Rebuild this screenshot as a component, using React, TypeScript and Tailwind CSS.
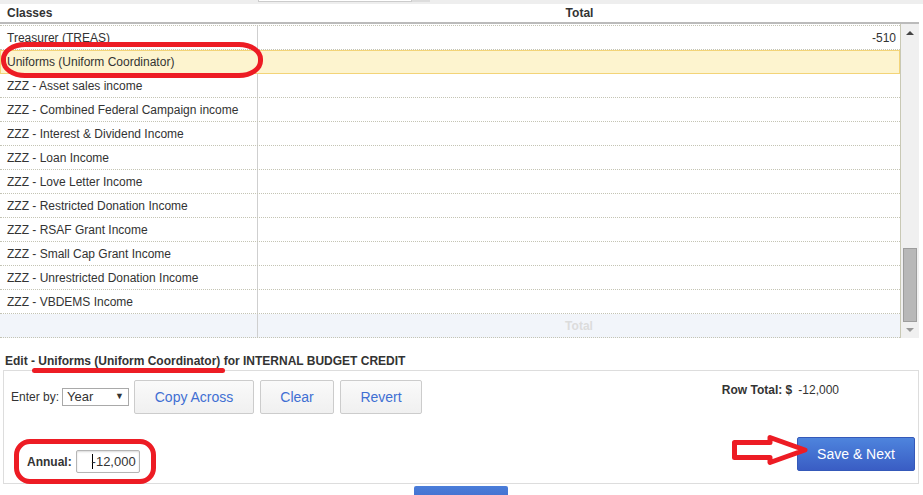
import React from "react";

const rows = [
  { name: "Treasurer (TREAS)", total: "-510" },
  { name: "Uniforms (Uniform Coordinator)", total: "", selected: true },
  { name: "ZZZ - Asset sales income", total: "" },
  { name: "ZZZ - Combined Federal Campaign income", total: "" },
  { name: "ZZZ - Interest & Dividend Income", total: "" },
  { name: "ZZZ - Loan Income", total: "" },
  { name: "ZZZ - Love Letter Income", total: "" },
  { name: "ZZZ - Restricted Donation Income", total: "" },
  { name: "ZZZ - RSAF Grant Income", total: "" },
  { name: "ZZZ - Small Cap Grant Income", total: "" },
  { name: "ZZZ - Unrestricted Donation Income", total: "" },
  { name: "ZZZ - VBDEMS Income", total: "" },
];

function GridRow({ name, total, selected }: { name: string; total: string; selected?: boolean }) {
  if (selected) {
    return (
      <div className="flex h-[24px] bg-[#fdf4cf] border border-[#f3d478] items-center">
        <div className="w-[257px] pl-[6px] truncate">{name}</div>
        <div className="flex-1 text-right pr-[4px]">{total}</div>
      </div>
    );
  }
  return (
    <div className="flex h-[24px] border-b border-dotted border-[#c4c4b4]">
      <div className="w-[258px] pl-[7px] border-r border-[#cfcfcf] flex items-center">{name}</div>
      <div className="flex-1 text-right pr-[4px] flex items-center justify-end">{total}</div>
    </div>
  );
}

function Scrollbar() {
  return (
    <div className="w-[19px] border-l border-[#c8c8b4] bg-[#f0f0f0] flex flex-col">
      <div className="h-[18px] flex items-center justify-center">
        <div className="w-0 h-0 border-l-[4px] border-r-[4px] border-b-[4px] border-l-transparent border-r-transparent border-b-[#444]" />
      </div>
      <div className="flex-1" />
      <div className="h-[74px] mx-[2px] bg-[#b8b8b8] border border-[#9d9d9d]" />
      <div className="h-[16px] flex items-center justify-center">
        <div className="w-0 h-0 border-l-[4px] border-r-[4px] border-t-[4px] border-l-transparent border-r-transparent border-t-[#999]" />
      </div>
    </div>
  );
}

function GrayButton({ label, w }: { label: string; w: string }) {
  return (
    <button className={`${w} h-[34px] bg-gradient-to-b from-[#fafafa] to-[#f0f0f0] border border-[#cccccc] rounded-[2px] text-[14px] text-[#3f6fd3]`}>
      {label}
    </button>
  );
}

export default function App() {
  return (
    <div className="relative w-[923px] h-[495px] overflow-hidden bg-white text-[12px] text-[#333] font-['Liberation_Sans',Arial,sans-serif]">
      {/* top strip */}
      <div className="h-[4px] bg-[#eeeeee] flex">
        <div className="ml-[258px] w-[154px] h-[2px] bg-white border border-t-0 border-[#cccccc]" />
        <div className="w-[18px] h-[2px] bg-[#dddddd]" />
      </div>

      {/* header */}
      <div className="w-[919px] h-[20px] flex border-b-2 border-[#bbbbbb] font-bold">
        <div className="w-[258px] pl-[7px] flex items-center">Classes</div>
        <div className="w-[643px] flex items-center justify-center">Total</div>
      </div>

      {/* body */}
      <div className="w-[919px] h-[314px] flex">
        <div className="w-[900px] pt-[1px]">
          <div className="border-t border-dotted border-[#c4c4b4]">
            {rows.map((r) => (
              <GridRow key={r.name} {...r} />
            ))}
            <div className="flex h-[24px] bg-[#f2f5fa] border-b border-dotted border-[#c4c4b4]">
              <div className="w-[258px] border-r border-[#cfcfcf]" />
              <div className="flex-1 flex items-center justify-center font-bold text-[#dcdcdc]">Total</div>
            </div>
          </div>
        </div>
        <Scrollbar />
      </div>

      {/* edit title */}
      <div className="mt-[16px] pl-[5px] h-[14px] leading-[14px] font-bold">
        Edit - Uniforms (Uniform Coordinator) for INTERNAL BUDGET CREDIT
      </div>

      {/* edit box */}
      <div className="mt-[2px] ml-[3px] w-[916px] h-[114px] border border-[#dddddd] flex flex-col">
        <div className="mt-[9px] h-[34px] flex items-start">
          <div className="pl-[7px] h-[34px] flex items-center">
            <span>Enter by:</span>
            <div className="ml-[3px] w-[67px] h-[18px] border border-[#a9a9a9] bg-white flex items-center justify-between pl-[4px] pr-[4px] text-[13px]">
              <span>Year</span>
              <span className="text-[9px]">▼</span>
            </div>
          </div>
          <div className="ml-[5px] flex gap-[6px]">
            <GrayButton label="Copy Across" w="w-[120px]" />
            <GrayButton label="Clear" w="w-[74px]" />
            <GrayButton label="Revert" w="w-[82px]" />
          </div>
          <div className="ml-auto mr-[79px] mt-[1px] flex gap-[6px]">
            <span className="font-bold">Row Total: $</span>
            <span>-12,000</span>
          </div>
        </div>
        <div className="mt-[23px] flex items-start">
          <div className="pl-[23px] mt-[13px] flex items-center">
            <span className="font-bold">Annual:</span>
            <div className="ml-[4px] w-[64px] h-[23px] border border-[#b5b5b5] rounded-[2px] shadow-[inset_0_1px_2px_rgba(0,0,0,0.15)] flex items-center justify-end pr-[3px] text-[13px]">
              <span className="w-px h-[15px] bg-black mr-[-1px]" />
              <span>-12,000</span>
            </div>
          </div>
          <button className="ml-auto mr-[3px] w-[118px] h-[34px] rounded-[2px] border border-[#3559b9] bg-gradient-to-b from-[#4e84dd] to-[#3a5dc4] text-white text-[14px]">
            Save &amp; Next
          </button>
        </div>
      </div>

      {/* partial button below */}
      <div className="mt-[2px] ml-[414px] w-[94px] h-[20px] rounded-t-[2px] bg-gradient-to-b from-[#4a7dd9] to-[#3f68c9]" />

      {/* annotations */}
      <div className="absolute left-[1px] top-[42px] w-[262px] h-[36px] border-[5px] border-[#ed1c24] rounded-[24px/17px]" />
      <div className="absolute left-[32px] top-[368px] w-[193px] h-[5px] bg-[#ed1c24] rounded-full" />
      <div className="absolute left-[14px] top-[439px] w-[142px] h-[45px] border-[5px] border-[#ed1c24] rounded-[16px]" />
      <svg className="absolute left-[728px] top-[432px]" width="85" height="36" viewBox="0 0 85 36">
        <polygon
          points="6.5,10.5 42,10.5 42,5.5 77,18 42,30.5 42,25.5 6.5,25.5"
          fill="white"
          stroke="#ed1c24"
          strokeWidth="5"
          strokeLinejoin="round"
        />
      </svg>
    </div>
  );
}
